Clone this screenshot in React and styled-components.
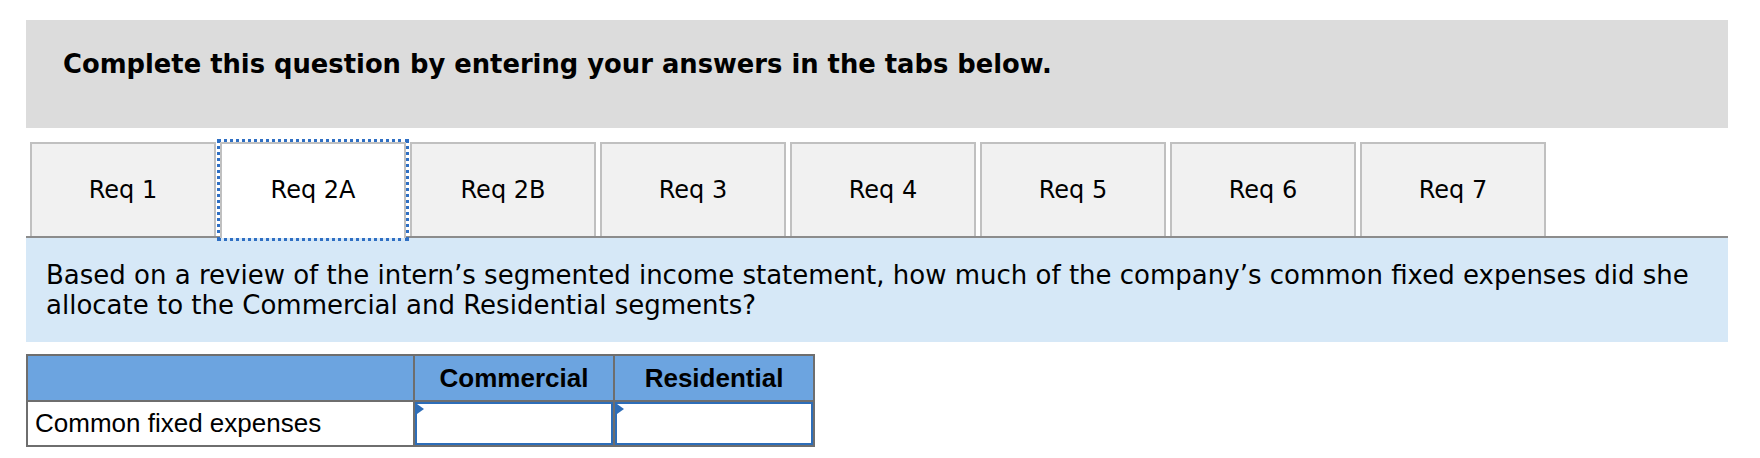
import styled, { createGlobalStyle } from "styled-components";

const GlobalStyle = createGlobalStyle`
  body {
    margin: 0;
    background: #ffffff;
    font-family: "DejaVu Sans", Verdana, sans-serif;
    color: #000000;
  }
`;

const tabs = ["Req 1", "Req 2A", "Req 2B", "Req 3", "Req 4", "Req 5", "Req 6", "Req 7"];

const App = () => {
  return (
    <Page>
      <GlobalStyle />
      <Header>Complete this question by entering your answers in the tabs below.</Header>
      <TabRow>
        {tabs.map((t) => (
          <Tab key={t} $active={t === "Req 2A"}>
            {t}
          </Tab>
        ))}
      </TabRow>
      <Question>
        Based on a review of the intern’s segmented income statement, how much of the company’s common fixed expenses did she
        <br />
        allocate to the Commercial and Residential segments?
      </Question>
      <Table>
        <thead>
          <tr>
            <HeadCell $wide />
            <HeadCell>Commercial</HeadCell>
            <HeadCell>Residential</HeadCell>
          </tr>
        </thead>
        <tbody>
          <tr>
            <LabelCell>Common fixed expenses</LabelCell>
            <InputCell>
              <InputBox>
                <Marker />
              </InputBox>
            </InputCell>
            <InputCell>
              <InputBox>
                <Marker />
              </InputBox>
            </InputCell>
          </tr>
        </tbody>
      </Table>
    </Page>
  );
};

const Page = styled.div`
  width: 1702px;
  padding: 20px 0 0 26px;
`;

const Header = styled.div`
  height: 108px;
  box-sizing: border-box;
  background: #dcdcdc;
  padding: 29px 0 0 37px;
  font-size: 25.8px;
  font-weight: 700;
  white-space: nowrap;
`;

const TabRow = styled.div`
  display: flex;
  gap: 4px;
  margin-top: 14px;
  padding-left: 4px;
  height: 94px;
  border-bottom: 2px solid #8c8c8c;
`;

const Tab = styled.div`
  width: 186px;
  height: ${(p) => (p.$active ? "96px" : "94px")};
  margin-bottom: ${(p) => (p.$active ? "-2px" : "0")};
  box-sizing: border-box;
  border: 2px solid #c0c0c0;
  border-bottom: none;
  background: ${(p) => (p.$active ? "#ffffff" : "#f1f1f1")};
  outline: ${(p) => (p.$active ? "3px dotted #2f6fc3" : "none")};
  position: relative;
  z-index: ${(p) => (p.$active ? 1 : 0)};
  display: flex;
  align-items: center;
  justify-content: center;
  padding-bottom: ${(p) => (p.$active ? "2px" : "0")};
  font-size: 24px;
`;

const Question = styled.div`
  height: 104px;
  box-sizing: border-box;
  background: #d6e8f7;
  padding: 22px 20px 0 20px;
  font-size: 26px;
  line-height: 30px;
  white-space: nowrap;
`;

const Table = styled.table`
  margin-top: 12px;
  border-collapse: collapse;
  font-family: "Liberation Sans", Arial, sans-serif;
`;

const HeadCell = styled.th`
  width: ${(p) => (p.$wide ? "385px" : "198px")};
  height: 44px;
  padding: 0;
  background: #6ca4e0;
  border: 2px solid #6e6e6e;
  font-size: 26px;
  font-weight: 700;
  text-align: center;
`;

const LabelCell = styled.td`
  height: 43px;
  padding: 0 0 0 7px;
  border: 2px solid #6e6e6e;
  font-size: 26px;
`;

const InputCell = styled.td`
  height: 43px;
  padding: 0;
  border: 2px solid #6e6e6e;
`;

const InputBox = styled.div`
  position: relative;
  height: 43px;
  box-sizing: border-box;
  border: 2px solid #2d6db8;
  background: #ffffff;
`;

const Marker = styled.span`
  position: absolute;
  left: 0;
  top: 0;
  width: 0;
  height: 0;
  border-top: 5px solid transparent;
  border-bottom: 5px solid transparent;
  border-left: 7px solid #2d6db8;
`;

export default App;
